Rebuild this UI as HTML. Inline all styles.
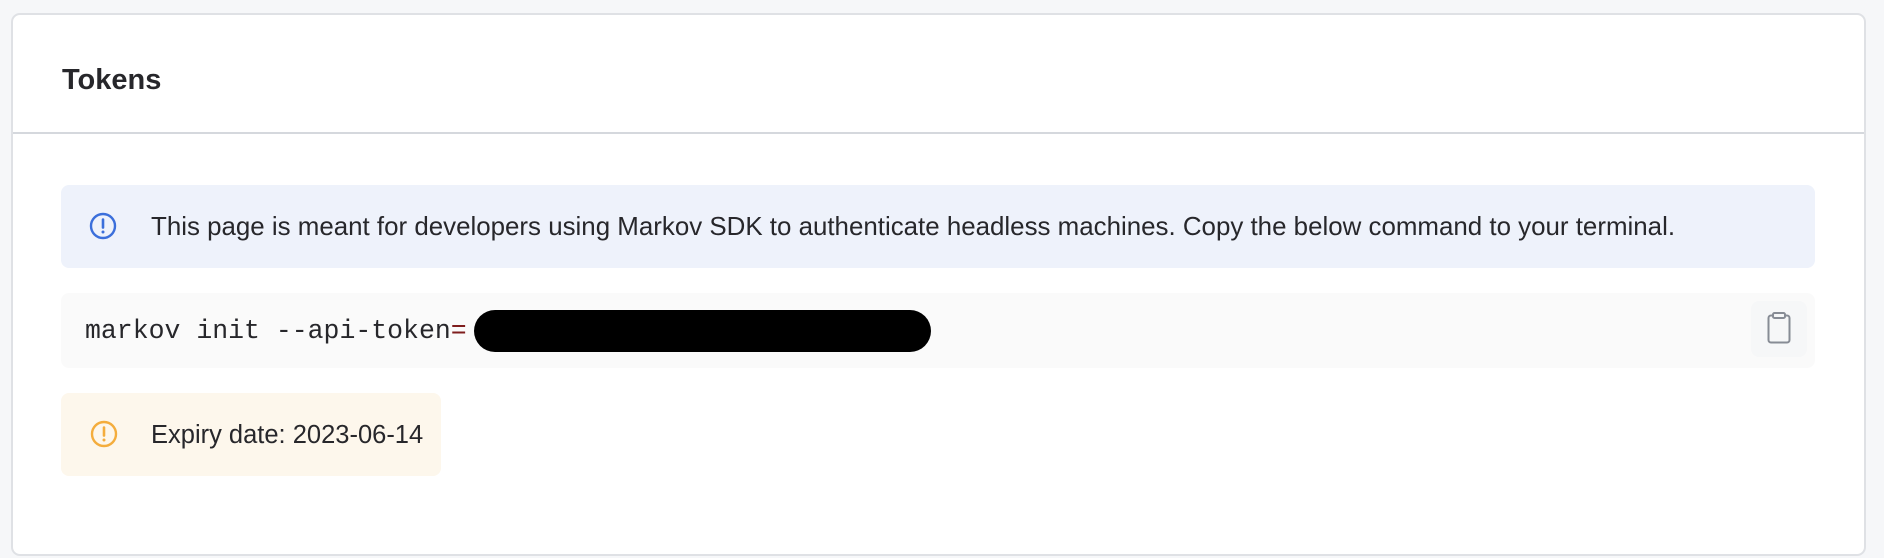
<!DOCTYPE html>
<html><head><meta charset="utf-8"><style>
*{margin:0;padding:0;box-sizing:border-box}
body{width:1884px;height:558px;background:#f6f7f9;font-family:"Liberation Sans",sans-serif;position:relative;overflow:hidden}
.card{position:absolute;left:11px;top:13px;width:1855px;height:543px;background:#fff;border:2px solid #dfe1e5;border-radius:9px}
.title{position:absolute;left:49px;top:49px;font-size:29px;font-weight:600;color:#27272b}
.div{position:absolute;left:0;right:0;top:117px;height:2px;background:#d5d8dd}
.box{position:absolute;border-radius:8px}
.info{left:48px;top:170px;width:1754px;height:83px;background:#eef2fb}
.code{left:48px;top:278px;width:1754px;height:75px;background:#fafafa}
.exp{left:48px;top:378px;width:380px;height:83px;background:#fdf7ec}
.t{position:absolute;color:#27272b;white-space:nowrap}
</style></head><body>
<div class="card">
<div class="title">Tokens</div>
<div class="div"></div>
<div class="box info">
<svg style="position:absolute;left:28px;top:27px" width="28" height="28" viewBox="0 0 28 28"><circle cx="14" cy="14" r="12" fill="none" stroke="#3b6fdb" stroke-width="2.4"/><line x1="14" y1="7.5" x2="14" y2="15.5" stroke="#3b6fdb" stroke-width="2.6" stroke-linecap="round"/><circle cx="14" cy="20" r="1.5" fill="#3b6fdb"/></svg>
<div class="t" style="left:90px;top:28px;font-size:25.9px">This page is meant for developers using Markov SDK to authenticate headless machines. Copy the below command to your terminal.</div>
</div>
<div class="box code">
<div style="position:absolute;left:24px;top:23px;font-family:'Liberation Mono',monospace;font-size:26.5px;color:#27272b;white-space:nowrap">markov init --api-token<span style="color:#7f1d1d">=</span></div>
<div style="position:absolute;left:413px;top:17px;width:457px;height:42px;background:#000;border-radius:21px"></div>
<div style="position:absolute;left:1690px;top:8px;width:56px;height:56px;background:#f6f7f8;border-radius:8px">
<svg style="position:absolute;left:16px;top:11px" width="24" height="32" viewBox="0 0 24 32"><rect x="1.5" y="3.5" width="21" height="27" rx="2.5" fill="none" stroke="#878c95" stroke-width="2"/><rect x="6" y="1" width="12" height="5" rx="1.5" fill="#f6f7f8" stroke="#878c95" stroke-width="2"/></svg>
</div>
</div>
<div class="box exp">
<svg style="position:absolute;left:29px;top:27px" width="28" height="28" viewBox="0 0 28 28"><circle cx="14" cy="14" r="12" fill="none" stroke="#f4ad3d" stroke-width="2.4"/><line x1="14" y1="7.5" x2="14" y2="15.5" stroke="#f4ad3d" stroke-width="2.6" stroke-linecap="round"/><circle cx="14" cy="20" r="1.5" fill="#f4ad3d"/></svg>
<div class="t" style="left:90px;top:28px;font-size:25.5px">Expiry date: 2023-06-14</div>
</div>
</div>
</body></html>
